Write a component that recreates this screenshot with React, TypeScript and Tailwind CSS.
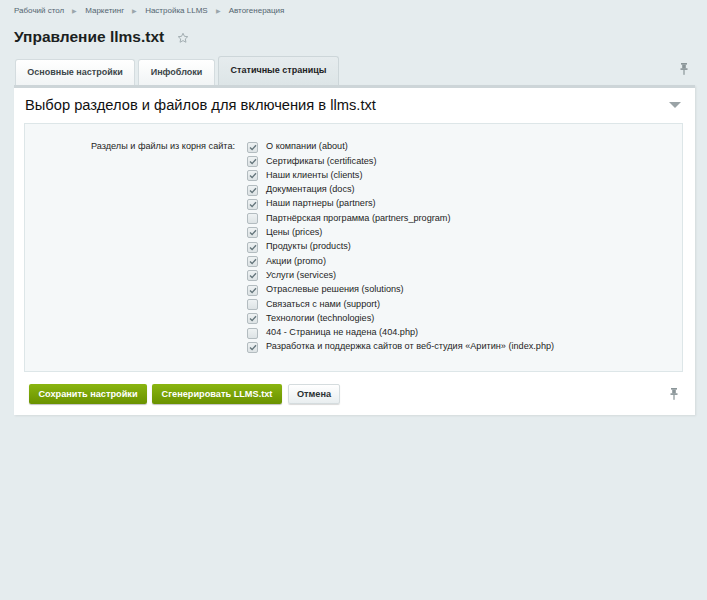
import type { ReactNode } from "react";

const crumbs = ["Рабочий стол", "Маркетинг", "Настройка LLMS", "Автогенерация"];

const items: { label: string; checked: boolean }[] = [
  { label: "О компании (about)", checked: true },
  { label: "Сертификаты (certificates)", checked: true },
  { label: "Наши клиенты (clients)", checked: true },
  { label: "Документация (docs)", checked: true },
  { label: "Наши партнеры (partners)", checked: true },
  { label: "Партнёрская программа (partners_program)", checked: false },
  { label: "Цены (prices)", checked: true },
  { label: "Продукты (products)", checked: true },
  { label: "Акции (promo)", checked: true },
  { label: "Услуги (services)", checked: true },
  { label: "Отраслевые решения (solutions)", checked: true },
  { label: "Связаться с нами (support)", checked: false },
  { label: "Технологии (technologies)", checked: true },
  { label: "404 - Страница не надена (404.php)", checked: false },
  { label: "Разработка и поддержка сайтов от веб-студия «Аритин» (index.php)", checked: true },
];

function Pin() {
  return (
    <svg width="8" height="12" viewBox="0 0 8 12" className="text-[#8a9598]">
      <rect x="1" y="0" width="6" height="1.6" fill="currentColor" />
      <rect x="2.2" y="1.5" width="3.6" height="4" fill="currentColor" />
      <rect x="0.5" y="5.3" width="7" height="1.6" fill="currentColor" />
      <rect x="3.4" y="6.8" width="1.2" height="5" fill="currentColor" />
    </svg>
  );
}

function Checkbox({ checked }: { checked: boolean }) {
  return (
    <span className="flex h-[11px] w-[11px] items-center justify-center rounded-[2px] border border-[#b3bcc0] bg-gradient-to-b from-[#eef2f3] to-[#dde3e5]">
      {checked ? (
        <svg width="8" height="7" viewBox="0 0 8 7">
          <path d="M1 3.6 L3.1 5.6 L7 1.2" fill="none" stroke="#65767c" strokeWidth="1.4" />
        </svg>
      ) : null}
    </span>
  );
}

function Tab({ children, active, className }: { children: ReactNode; active?: boolean; className: string }) {
  return (
    <div
      className={[
        "flex items-center justify-center rounded-t-[3px] border border-b-0 text-[9px] font-bold",
        active
          ? "h-[29px] border-[#cdd6d9] bg-gradient-to-b from-[#e6ecee] to-[#dde5e7] text-[#1d2224]"
          : "h-[26px] border-[#d4dcdf] bg-gradient-to-b from-[#ffffff] to-[#f1f4f5] text-[#3c4649]",
        className,
      ].join(" ")}
    >
      {children}
    </div>
  );
}

export default function App() {
  return (
    <div className="min-h-screen bg-[#e5ecee] pl-[14px] pr-[12px] pt-[5px] font-['Liberation_Sans',Arial,sans-serif]">
      <nav className="flex h-[12px] items-center text-[8px] text-[#536570]">
        {crumbs.map((c, i) => (
          <span key={c} className="flex items-center">
            {i > 0 ? <span className="mx-[8px] text-[5.5px] text-[#9aa6ab]">▶</span> : null}
            {c}
          </span>
        ))}
      </nav>

      <div className="mt-[9px] flex h-[22px] items-center">
        <h1 className="text-[15.5px] font-bold text-[#1b1f21]">Управление llms.txt</h1>
        <svg width="12" height="12" viewBox="0 0 24 24" className="ml-[13px] mt-[2px]">
          <path
            d="M12 2.5l2.9 6.1 6.6.8-4.9 4.5 1.3 6.6L12 17.2l-5.9 3.3 1.3-6.6-4.9-4.5 6.6-.8z"
            fill="none"
            stroke="#a3aeb2"
            strokeWidth="2"
            strokeLinejoin="round"
          />
        </svg>
      </div>

      <div className="mt-[8px] flex items-end">
        <div className="ml-[1px] flex items-end">
          <Tab className="w-[120px]">Основные настройки</Tab>
          <Tab className="ml-[3px] w-[77px]">Инфоблоки</Tab>
          <Tab active className="ml-[3px] w-[121px]">
            Статичные страницы
          </Tab>
        </div>
        <div className="ml-auto mb-[10px] mr-[7px]">
          <Pin />
        </div>
      </div>

      <div className="border-t-[3px] border-[#cdd5d8] bg-white shadow-[1px_1px_2px_rgba(0,0,0,0.08)]">
        <div className="flex h-[35px] items-center pl-[11px] pr-[14px]">
          <span className="text-[14.7px] text-[#111]">Выбор разделов и файлов для включения в llms.txt</span>
          <svg width="12" height="7" viewBox="0 0 12 7" className="ml-auto">
            <path d="M0 0 H12 L6 6 Z" fill="#9aa3a6" />
          </svg>
        </div>

        <div className="ml-[10px] mr-[12px] flex border border-[#dde6e8] bg-[#f5f8f9] pb-[17px] pt-[16px] text-[9.15px] text-[#1e1e1e]">
          <div className="w-[222px] shrink-0 pr-[12px] text-right">
            <div className="flex h-[14.3px] items-center justify-end">Разделы и файлы из корня сайта:</div>
          </div>
          <div className="flex flex-col">
            {items.map((it) => (
              <label key={it.label} className="flex h-[14.3px] items-center gap-[8px]">
                <Checkbox checked={it.checked} />
                <span>{it.label}</span>
              </label>
            ))}
          </div>
        </div>

        <div className="flex items-center pb-[11px] pl-[15px] pr-[17px] pt-[12px]">
          <button className="h-[20px] w-[118px] rounded-[2px] bg-gradient-to-b from-[#8ab510] to-[#6a9200] text-[9.2px] font-bold text-white shadow-[0_1px_1px_rgba(0,0,0,0.25)]">
            Сохранить настройки
          </button>
          <button className="ml-[5px] h-[20px] w-[130px] rounded-[2px] bg-gradient-to-b from-[#8ab510] to-[#6a9200] text-[9.2px] font-bold text-white shadow-[0_1px_1px_rgba(0,0,0,0.25)]">
            Сгенерировать LLMS.txt
          </button>
          <button className="ml-[6px] h-[20px] w-[52px] rounded-[2px] border border-[#d5dcde] bg-gradient-to-b from-[#ffffff] to-[#e9eef0] text-[9.2px] font-bold text-[#2b3133] shadow-[0_1px_1px_rgba(0,0,0,0.15)]">
            Отмена
          </button>
          <div className="ml-auto">
            <Pin />
          </div>
        </div>
      </div>
    </div>
  );
}
